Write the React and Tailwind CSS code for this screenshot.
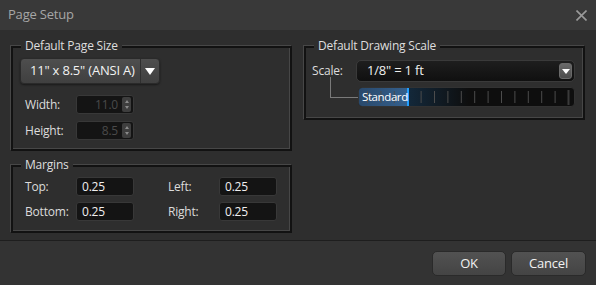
import React from "react";

function Group({ title, className, children }) {
  return (
    <div
      className={`relative border-2 border-[#121212] shadow-[-1px_-1px_0_#474747,inset_-1px_-1px_0_#474747] ${className}`}
    >
      <span className="absolute -top-[10px] left-[8px] bg-[#2e2e2e] px-[4px] text-[12px] leading-[16px] text-[#dedede]">
        {title}
      </span>
      {children}
    </div>
  );
}

function Field({ value, dim, spin }) {
  return (
    <div className="flex h-[19px] w-[58px] items-center rounded-[3px] border border-[#383838] bg-[#141414]">
      {spin ? (
        <>
          <span className="flex-1 pr-[4px] text-right text-[12px] text-[#4a4a4a]">{value}</span>
          <div className="mr-[2px] flex h-[15px] w-[9px] flex-col items-center justify-center gap-[3px] rounded-[2px] bg-[#3e3e3e]">
            <div className="h-0 w-0 border-x-[2px] border-b-[3px] border-x-transparent border-b-[#8a8a8a]" />
            <div className="h-0 w-0 border-x-[2px] border-t-[3px] border-x-transparent border-t-[#8a8a8a]" />
          </div>
        </>
      ) : (
        <span className={`pl-[5px] text-[12px] ${dim ? "text-[#4a4a4a]" : "text-[#f0f0f0]"}`}>{value}</span>
      )}
    </div>
  );
}

const ticks = [8, 21.4, 34.8, 61.6, 75, 88.4, 101.8, 115.2, 128.6, 142, 155.4, 168.8, 182.2, 195.6];

export default function App() {
  return (
    <div className="h-[285px] w-[596px] overflow-hidden bg-[#2e2e2e] font-['Open_Sans','Noto_Sans',sans-serif] tracking-[-0.2px]">
      <div className="flex h-[30px] items-center justify-between bg-[#393939] pl-[8px] pr-[8px]">
        <span className="text-[13px] text-[#a6a6a6]">Page Setup</span>
        <svg width="11" height="11" viewBox="0 0 11 11" className="mr-[1px]">
          <path d="M0.5 0.5 L10.5 10.5 M10.5 0.5 L0.5 10.5" stroke="#9a9a9a" strokeWidth="1.6" />
        </svg>
      </div>

      <div className="flex h-[210px] gap-[12px] pl-[11px] pt-[16px]">
        <div className="flex w-[281px] flex-col gap-[14px]">
          <Group title="Default Page Size" className="h-[105px]">
            <div className="flex flex-col pl-[7px] pt-[10px]">
              <div className="flex h-[26px] w-[140px] items-center rounded-[4px] border border-[#2a2a2a] bg-gradient-to-b from-[#4e4e4e] to-[#404040] shadow-[0_1px_2px_#1a1a1a]">
                <span className="flex-1 pl-[9px] text-[13px] text-[#f2f2f2]">11" x 8.5" (ANSI A)</span>
                <div className="flex h-full w-[19px] items-center justify-center border-l border-[#2f2f2f]">
                  <div className="h-0 w-0 border-x-[5px] border-t-[7px] border-x-transparent border-t-white" />
                </div>
              </div>
              <div className="mt-[11px] flex items-center pl-[5px]">
                <span className="w-[51px] text-[12px] text-[#dcdcdc]">Width:</span>
                <Field value="11.0" spin />
              </div>
              <div className="mt-[7px] flex items-center pl-[5px]">
                <span className="w-[51px] text-[12px] text-[#dcdcdc]">Height:</span>
                <Field value="8.5" spin />
              </div>
            </div>
          </Group>

          <Group title="Margins" className="h-[68px]">
            <div className="grid grid-cols-[51px_92px_51px_58px] items-center gap-y-[6px] pl-[12px] pt-[10px]">
              <span className="text-[12px] text-[#dcdcdc]">Top:</span>
              <Field value="0.25" />
              <span className="text-[12px] text-[#dcdcdc]">Left:</span>
              <Field value="0.25" />
              <span className="text-[12px] text-[#dcdcdc]">Bottom:</span>
              <Field value="0.25" />
              <span className="text-[12px] text-[#dcdcdc]">Right:</span>
              <Field value="0.25" />
            </div>
          </Group>
        </div>

        <div className="w-[281px]">
          <Group title="Default Drawing Scale" className="h-[74px]">
            <div className="absolute left-[24px] top-[29px] h-[21px] w-[28px] border-b border-l border-[#7a7a7a]" />
            <div className="flex flex-col pl-[6px] pr-[8px] pt-[12px]">
              <div className="flex items-center">
                <span className="w-[44px] text-[12px] text-[#dcdcdc]">Scale:</span>
                <div className="flex h-[22px] flex-1 items-center rounded-[5px] border border-[#3a3a3a] bg-gradient-to-b from-[#1e1e1e] to-[#101010]">
                  <span className="flex-1 pl-[10px] text-[13px] text-[#f0f0f0]">1/8" = 1 ft</span>
                  <div className="mr-[2px] flex h-[16px] w-[13px] items-center justify-center rounded-[3px] border border-[#6a6a6a] bg-gradient-to-b from-[#6a6a6a] to-[#4c4c4c]">
                    <div className="h-0 w-0 border-x-[4px] border-t-[5px] border-x-transparent border-t-white" />
                  </div>
                </div>
              </div>
              <div className="relative ml-[46px] mt-[5px] flex h-[20px] items-stretch overflow-hidden rounded-[4px] border border-[#323232] bg-[#0e0e0e]">
                <div className="flex w-[48px] items-center bg-gradient-to-r from-[#29496c] to-[#35608d]" />
                <div className="w-[2px] bg-[#22a0ff]" />
                <div className="w-[60px] bg-gradient-to-r from-[#13283a] to-transparent" />
                <svg className="absolute inset-0" width="217" height="18">
                  {ticks.map((x) => (
                    <line key={x} x1={x + 0.5} y1="3" x2={x + 0.5} y2="15" stroke="#4c4c4c" strokeWidth="1" />
                  ))}
                  <line x1="209.5" y1="2" x2="209.5" y2="17" stroke="#3a3a3a" strokeWidth="2" />
                </svg>
                <span className="absolute left-[3px] top-0 whitespace-nowrap text-[11.5px] leading-[18px] tracking-[-0.4px] text-white">
                  Standard
                </span>
              </div>
            </div>
          </Group>
        </div>
      </div>

      <div className="flex h-[45px] justify-end gap-[5px] border-t border-[#1e1e1e] bg-[#333333] pr-[10px] pt-[10px]">
        <button className="h-[25px] w-[74px] rounded-[5px] border border-[#2a2a2a] bg-gradient-to-b from-[#525252] to-[#444444] text-[13px] text-[#f2f2f2]">
          OK
        </button>
        <button className="h-[25px] w-[75px] rounded-[5px] border border-[#2a2a2a] bg-gradient-to-b from-[#525252] to-[#444444] text-[13px] text-[#f2f2f2]">
          Cancel
        </button>
      </div>
    </div>
  );
}
